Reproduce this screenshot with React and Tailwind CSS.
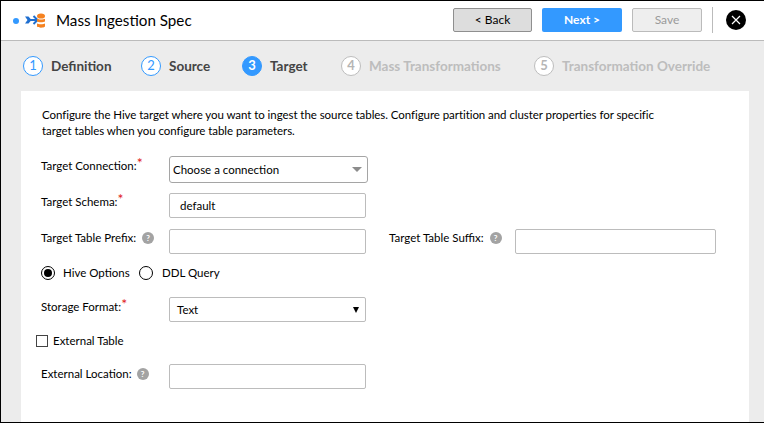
import React from "react";

const Step = ({ n, label, state, className }) => {
  const circle =
    state === "active"
      ? "bg-[#3399ff] border-[#3399ff] text-white font-bold"
      : state === "done"
      ? "bg-white border-[#3399ff] text-[#3399ff]"
      : "bg-white border-[#bdbdbd] text-[#b5b5b5] font-bold";
  const text = state === "todo" ? "text-[#bdbdbd]" : "text-[#444444]";
  return (
    <div className={`flex items-center ${className}`}>
      <div className={`w-5 h-5 rounded-full border flex items-center justify-center text-[13px] ${circle}`}>{n}</div>
      <span className={`ml-2 text-[13.5px] font-bold whitespace-nowrap ${text}`}>{label}</span>
    </div>
  );
};

const Help = () => (
  <span className="w-3 h-3 rounded-full bg-[#a3a3a3] text-white text-[8px] font-bold flex items-center justify-center">?</span>
);

const Req = () => <span className="text-[#e02020] text-[14px] leading-[14px] relative -top-[3px]">*</span>;

const Input = ({ value, className = "w-[197px]" }) => (
  <div className={`h-[25px] bg-white border border-[#bcbcbc] rounded-[2px] flex items-center text-[11.500px] text-black ${className}`}>
    {value}
  </div>
);

const Label = ({ children, className = "w-[128px] -ml-[1px]" }) => (
  <div className={`flex items-center h-[16px] text-[11.500px] text-black whitespace-nowrap ${className}`}>{children}</div>
);

export default function App() {
  return (
    <div className="w-[764px] h-[423px] overflow-hidden bg-[#ececec] border-t border-l border-b border-black font-['Lato',sans-serif] flex flex-col">
      {/* header */}
      <div className="h-[40px] shrink-0 bg-white border-b border-[#bbbbbb] flex items-center pl-[12px]">
        <span className="w-[6px] h-[6px] rounded-full bg-[#3399ff]" />
        <svg width="21" height="16" viewBox="0 0 21 16" className="ml-[6px]">
          <path d="M0 3.500l3.500 0 3 3.500 -3 3.500 -3.500 0 2.500 -3.500z" fill="#1f6fd0" />
          <path d="M5 7h7" stroke="#1f6fd0" strokeWidth="2" />
          <path d="M8.500 3l4 4 -4 4" fill="none" stroke="#1f6fd0" strokeWidth="2" />
          <ellipse cx="16" cy="3" rx="4" ry="2.600" fill="#f58220" />
          <path d="M12 5.800c1.500 1 6.500 1 8 0v2.800c-1.500 1-6.500 1-8 0z" fill="#f58220" />
          <path d="M12 10.500c1.500 1 6.500 1 8 0v3c-1.500 1.600-6.500 1.600-8 0z" fill="#f58220" />
        </svg>
        <span className="ml-[10px] text-[15.200px] text-black">Mass Ingestion Spec</span>
        <div className="ml-auto -mt-[1px] flex items-center pr-[18px]">
          <button className="w-[79px] h-[24px] bg-[#dddddd] border border-[#8f8f8f] rounded-[2px] text-[12px] text-black">&lt; Back</button>
          <button className="ml-[10px] w-[80px] h-[24px] bg-[#3399ff] rounded-[2px] text-[12px] font-bold text-white">Next &gt;</button>
          <button className="ml-[10px] w-[70px] h-[24px] bg-[#eeeeee] border border-[#bbbbbb] rounded-[2px] text-[12px] text-[#9a9a9a]">Save</button>
          <span className="ml-[10px] w-px h-[26px] bg-[#bbbbbb]" />
          <span className="ml-[13px] w-[20px] h-[20px] rounded-full bg-black flex items-center justify-center">
            <svg width="10" height="10" viewBox="0 0 10 10">
              <path d="M1 1l8 8M9 1l-8 8" stroke="white" strokeWidth="1.200" />
            </svg>
          </span>
        </div>
      </div>

      {/* steps */}
      <div className="h-[50px] shrink-0 flex items-center pl-[22px]">
        <Step n="1" label="Definition" state="done" className="w-[118px]" />
        <Step n="2" label="Source" state="done" className="w-[101px]" />
        <Step n="3" label="Target" state="active" className="w-[99px]" />
        <Step n="4" label="Mass Transformations" state="todo" className="w-[193px]" />
        <Step n="5" label="Transformation Override" state="todo" />
      </div>

      {/* form */}
      <div className="flex-1 ml-[20px] mr-[15px] bg-white pl-[21px] pt-[16px]">
        <p className="text-[11.500px] tracking-[-0.06px] leading-[16px] text-black whitespace-nowrap">
          Configure the Hive target where you want to ingest the source tables. Configure partition and cluster properties for specific
          <br />
          target tables when you configure table parameters.
        </p>

        <div className="mt-[17px] flex items-start">
          <Label className="w-[128px] -ml-[1px] mt-[2px]">Target Connection:<Req /></Label>
          <div className="w-[199px] h-[27px] border border-[#a5a5a5] rounded-[3px] flex items-center pl-[3px] pr-[5px] text-[11.500px] text-black">
            Choose a connection
            <span className="ml-auto w-0 h-0 border-x-[5px] border-x-transparent border-t-[5px] border-t-[#8c8c8c]" />
          </div>
        </div>

        <div className="mt-[10px] flex items-start">
          <Label className="w-[128px] -ml-[1px] mt-[1px]">Target Schema:<Req /></Label>
          <Input value="default" className="w-[197px] pl-[10px]" />
        </div>

        <div className="mt-[11px] flex items-start">
          <Label className="w-[128px] -ml-[1px] mt-[1px]">Target Table Prefix:<span className="ml-[6px]"><Help /></span></Label>
          <Input />
          <Label className="w-[126px] ml-[23px] mt-[1px]">Target Table Suffix:<span className="ml-[6px]"><Help /></span></Label>
          <Input className="w-[201px]" />
        </div>

        <div className="mt-[11px] -ml-[1px] h-[16px] flex items-center text-[11.500px] text-black whitespace-nowrap">
          <span className="w-[14px] h-[14px] rounded-full border border-black flex items-center justify-center">
            <span className="w-[8px] h-[8px] rounded-full bg-black" />
          </span>
          <span className="ml-[8px] w-[66px]">Hive Options</span>
          <span className="ml-[10px] w-[14px] h-[14px] rounded-full border border-black" />
          <span className="ml-[9px]">DDL Query</span>
        </div>

        <div className="mt-[16px] flex items-start">
          <Label className="w-[128px] -ml-[1px] mt-[2px]">Storage Format:<Req /></Label>
          <div className="w-[197px] h-[25px] border border-[#bcbcbc] rounded-[2px] flex items-center pl-[7px] pr-[6px] text-[11.500px] text-black">
            Text
            <span className="ml-auto w-0 h-0 border-x-[3.500px] border-x-transparent border-t-[6px] border-t-black" />
          </div>
        </div>

        <div className="mt-[11px] -ml-[6px] h-[16px] flex items-center text-[11.500px] text-black">
          <span className="w-[12px] h-[12px] border border-[#444444] bg-white" />
          <span className="ml-[5px]">External Table</span>
        </div>

        <div className="mt-[15px] flex items-start">
          <Label className="w-[128px] -ml-[1px] mt-[2px]">External Location:<span className="ml-[5px]"><Help /></span></Label>
          <Input />
        </div>
      </div>
    </div>
  );
}
